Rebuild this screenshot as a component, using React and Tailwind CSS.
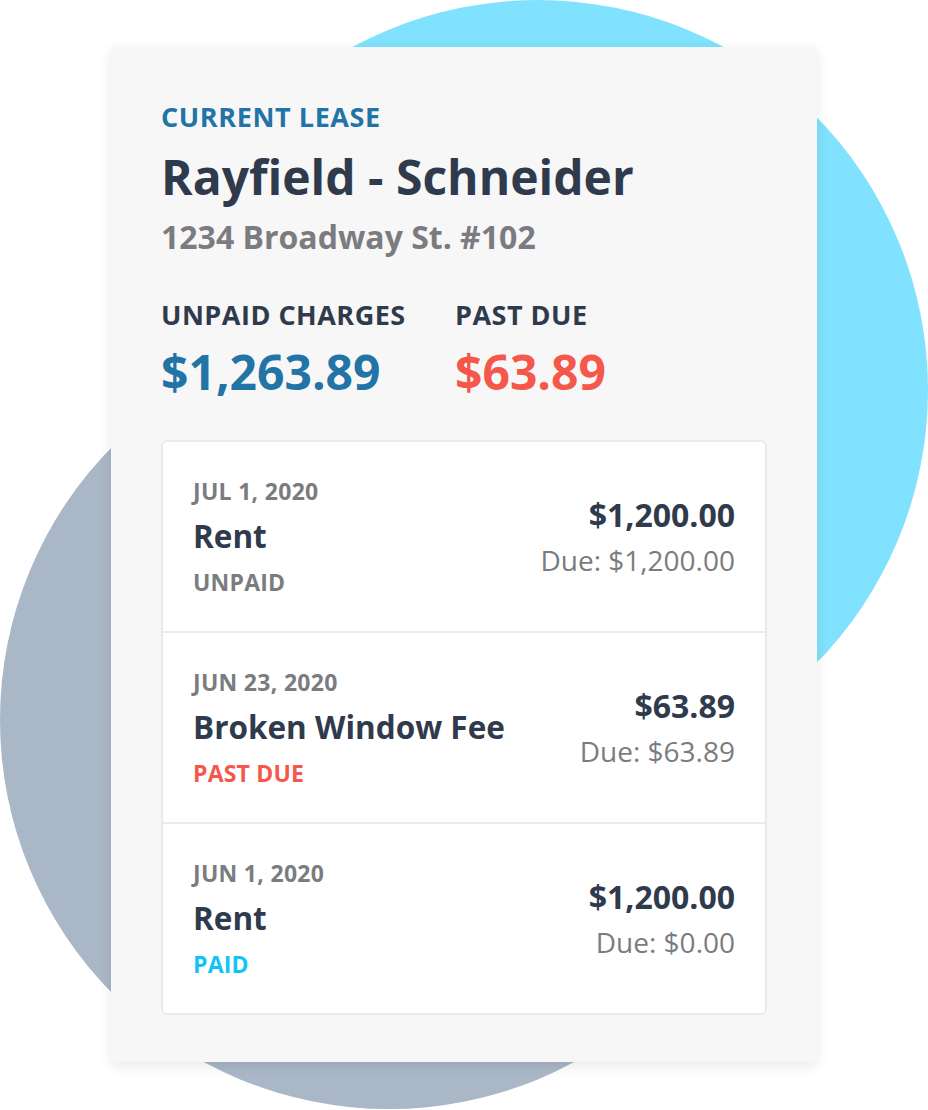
const charges = [
  { date: 'JUL 1, 2020', title: 'Rent', status: 'UNPAID', statusColor: 'text-[#7b7c7f]', amount: '$1,200.00', due: 'Due: $1,200.00' },
  { date: 'JUN 23, 2020', title: 'Broken Window Fee', status: 'PAST DUE', statusColor: 'text-[#f5574b]', amount: '$63.89', due: 'Due: $63.89' },
  { date: 'JUN 1, 2020', title: 'Rent', status: 'PAID', statusColor: 'text-[#12c4f6]', amount: '$1,200.00', due: 'Due: $0.00' },
];

function ChargeRow({ charge, first }) {
  return (
    <div className={`flex items-center justify-between pl-[30px] pr-[30px] py-[36px] ${first ? '' : 'border-t-2 border-[#e7eaee]'}`}>
      <div className="flex flex-col">
        <div className="text-[23px] leading-[26px] font-bold tracking-[0.3px] text-[#7b7c7f]">{charge.date}</div>
        <div className="mt-[14px] text-[31.5px] leading-[36px] font-bold text-[#2f3b4c]">{charge.title}</div>
        <div className={`mt-[15px] text-[23px] leading-[26px] font-bold tracking-[0.2px] ${charge.statusColor}`}>{charge.status}</div>
      </div>
      <div className="flex flex-col items-end">
        <div className="text-[32px] leading-[34px] font-bold text-[#2f3b4c]">{charge.amount}</div>
        <div className="mt-[12px] text-[28px] leading-[32px] text-[#7b7c7f]">{charge.due}</div>
      </div>
    </div>
  );
}

export default function App() {
  return (
    <div className="relative w-[928px] h-[1110px] overflow-hidden bg-white font-['Open_Sans',sans-serif]">
      {/* background circles */}
      <div className="absolute left-[148px] top-0 w-[780px] h-[780px] rounded-full bg-[#80e2fe]" />
      <div className="absolute left-0 top-[331px] w-[778px] h-[778px] rounded-full bg-[#aab7c7]" />

      <div className="relative ml-[111px] mt-[47px] w-[706px] h-[1015px] rounded-[3px] bg-[#f7f7f7] shadow-[0_4px_14px_rgba(0,0,0,0.09)] px-[50px] pt-[55px]">
        <div className="text-[27px] leading-[30px] font-bold text-[#2273a6] tracking-[0.6px]">CURRENT LEASE</div>
        <div className="mt-[17px] text-[48px] leading-[56px] font-bold text-[#2f3b4c]">Rayfield - Schneider</div>
        <div className="mt-[14px] text-[32px] leading-[36px] font-bold text-[#7b7c7f]">1234 Broadway St. #102</div>

        <div className="mt-[45px] flex">
          <div className="w-[294px]">
            <div className="text-[27px] leading-[30px] font-bold tracking-[0.5px] text-[#2f3b4c]">UNPAID CHARGES</div>
            <div className="mt-[14px] text-[48px] leading-[56px] font-bold text-[#2273a6]">$1,263.89</div>
          </div>
          <div>
            <div className="text-[27px] leading-[30px] font-bold tracking-[0.5px] text-[#2f3b4c]">PAST DUE</div>
            <div className="mt-[14px] text-[48px] leading-[56px] font-bold text-[#f5574b]">$63.89</div>
          </div>
        </div>

        <div className="mt-[40px] rounded-[6px] border-2 border-[#e7eaee] bg-white">
          {charges.map((c, i) => (
            <ChargeRow key={i} charge={c} first={i === 0} />
          ))}
        </div>
      </div>
    </div>
  );
}
